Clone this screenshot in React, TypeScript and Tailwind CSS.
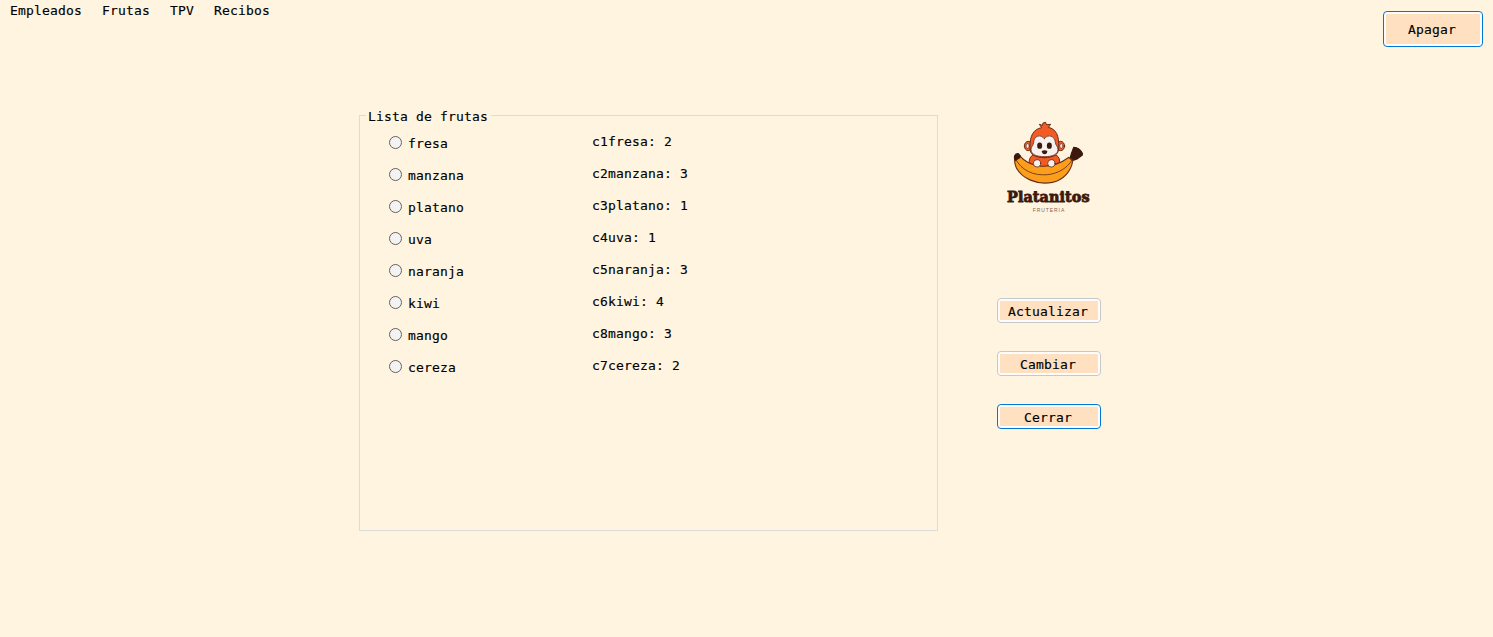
const MENU = ["Empleados", "Frutas", "TPV", "Recibos"];

const FRUITS = [
  { name: "fresa", detail: "c1fresa: 2" },
  { name: "manzana", detail: "c2manzana: 3" },
  { name: "platano", detail: "c3platano: 1" },
  { name: "uva", detail: "c4uva: 1" },
  { name: "naranja", detail: "c5naranja: 3" },
  { name: "kiwi", detail: "c6kiwi: 4" },
  { name: "mango", detail: "c8mango: 3" },
  { name: "cereza", detail: "c7cereza: 2" },
];

function Logo() {
  return (
    <svg viewBox="0 0 330 330" className="h-[110px] w-[110px]" aria-label="Platanitos Frutería">
      <g stroke="#6b2c17" strokeWidth="3" strokeLinejoin="round" strokeLinecap="round">
        <ellipse cx="100" cy="108" rx="12" ry="14" fill="#f0602c" />
        <ellipse cx="197" cy="108" rx="12" ry="14" fill="#f0602c" />
        <ellipse cx="98" cy="108" rx="5" ry="7" fill="#f5e9df" strokeWidth="2" />
        <ellipse cx="199" cy="108" rx="5" ry="7" fill="#f5e9df" strokeWidth="2" />
        <path d="M103 160 Q100 143 114 135 H183 Q197 143 193 162 L170 172 H125Z" fill="#f25c24" />
        <path
          d="M148 143 C120 143 104 134 105 113 C104 76 116 57 140 53 L133 43 L142 46 Q142 36 152 37 L154 44 L167 43 L160 52 C183 57 193 76 191 113 C192 134 176 143 148 143Z"
          fill="#f25c24"
        />
        <path
          d="M148 86 C138 71 116 77 116 97 C116 105 108 109 108 119 C109 134 125 140 148 140 C172 140 188 134 189 119 C189 109 181 105 181 97 C180 77 158 71 148 86Z"
          fill="#f6f1ee"
          strokeWidth="2.5"
        />
      </g>
      <ellipse cx="134" cy="107" rx="7.5" ry="9.5" fill="#3d180d" />
      <ellipse cx="163" cy="107" rx="7.5" ry="9.5" fill="#3d180d" />
      <path d="M140 123 Q149 118 157 123 Q156 133 149 133 Q142 133 140 123Z" fill="#3d180d" />
      <g stroke="#6b2c17" strokeWidth="3.5" strokeLinejoin="round" strokeLinecap="round">
        <path
          d="M62 138 L76 139 C86 151 105 163 132 168 C165 172 196 161 222 142 L233 153 C229 182 207 209 172 217 C125 226 80 205 64 173 C58 160 58 147 62 138Z"
          fill="#fa9e1c"
        />
        <path d="M62 148 C80 181 115 198 158 194 C191 190 216 174 231 151" fill="none" strokeWidth="2.5" />
        <circle cx="126" cy="160" r="11" fill="#f6f1ee" strokeWidth="2.5" />
        <circle cx="169" cy="160" r="11" fill="#f6f1ee" strokeWidth="2.5" />
        <path d="M59 137 Q63 130 70 131 L76 138 L74 143 L61 151 Q57 145 59 137Z" fill="#3d180d" stroke="#3d180d" />
        <path d="M236 112 Q254 113 262 130 L262 135 L246 147 L236 151 L226 142 L229 131Z" fill="#3d180d" stroke="#3d180d" />
      </g>
      <text
        x="36"
        y="276"
        textLength="248"
        lengthAdjust="spacingAndGlyphs"
        fontSize="43"
        fontWeight="700"
        fill="#3d180d"
        stroke="#3d180d"
        strokeWidth="2.5"
        fontFamily="'DejaVu Serif', serif"
      >
        Platanitos
      </text>
      <text x="113" y="306" textLength="95" fontSize="15" fill="#85634f" fontFamily="'Liberation Sans', sans-serif">
        FRUTERIA
      </text>
    </svg>
  );
}

function Button({ label, focused = false, large = false }: { label: string; focused?: boolean; large?: boolean }) {
  return (
    <button
      className={`rounded-[4px] border bg-[#fffdfb] p-[2px] ${focused ? "border-[#0078d4]" : "border-[#c8c8c8]"} ${
        large ? "h-[36px] w-[100px]" : "h-[25px] w-[104px]"
      }`}
    >
      <span className="flex h-full items-center justify-center bg-[#ffe0c0] pt-[2px] pr-[2px] leading-4">{label}</span>
    </button>
  );
}

export default function App() {
  return (
    <div className="h-[637px] w-full overflow-hidden bg-[#fff4df] font-['DejaVu_Sans_Mono','Liberation_Mono',monospace] text-[13px] leading-4 tracking-[0.174px] text-black [-webkit-text-stroke:0.15px_black]">
      <header className="flex h-[110px] items-start justify-between pr-[10px] pl-[10px]">
        <nav className="flex gap-5 pt-[3px]">
          {MENU.map((item) => (
            <a key={item}>{item}</a>
          ))}
        </nav>
        <div className="flex pt-[11px]">
          <Button label="Apagar" focused large />
        </div>
      </header>
      <main className="flex items-start pl-[359px]">
        <section className="mt-[5px] h-[416px] w-[579px] border border-[#dcdcdc]">
          <h2 className="-mt-[7px] ml-[6px] w-[125px] bg-[#fff4df] pl-[2px]">Lista de frutas</h2>
          <ul className="pt-px pl-[29px]">
            {FRUITS.map((fruit) => (
              <li key={fruit.name} className="flex h-8 items-center">
                <label className="flex w-[203px] items-center gap-[6px]">
                  <input
                    type="radio"
                    name="fruit"
                    className="h-[13px] w-[13px] appearance-none rounded-full border border-[#626262] bg-[#f3f3f3]"
                  />
                  <span className="pt-[3px]">{fruit.name}</span>
                </label>
                <span className="pb-px">{fruit.detail}</span>
              </li>
            ))}
          </ul>
        </section>
        <aside className="ml-[57px] flex w-[110px] flex-col tracking-[0.174px]">
          <Logo />
          <div className="mt-[78px] ml-[2px] flex flex-col gap-7">
            <Button label="Actualizar" />
            <Button label="Cambiar" />
            <Button label="Cerrar" focused />
          </div>
        </aside>
      </main>
    </div>
  );
}
